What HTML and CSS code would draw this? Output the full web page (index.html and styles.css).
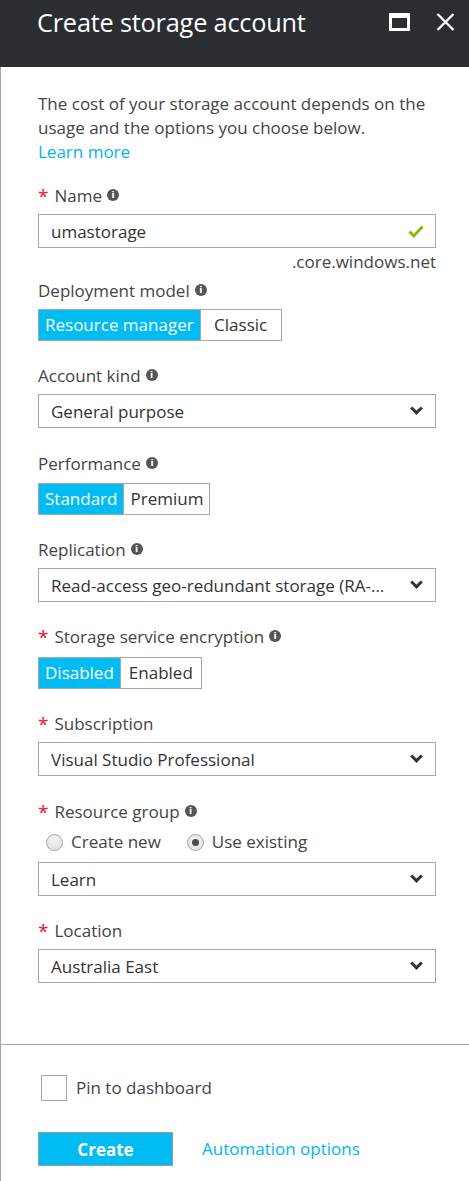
FILE: index.html
```html
<!DOCTYPE html>
<html lang="en">
<head>
<meta charset="utf-8">
<title>Create storage account</title>
<link rel="stylesheet" href="styles.css">
</head>
<body>
<div class="blade">
  <header class="blade-header">
    <h1 class="blade-title">Create storage account</h1>
    <div class="blade-actions">
      <svg class="icon-maximize" width="21" height="18" viewBox="0 0 21 18" aria-hidden="true">
        <path fill="#ffffff" fill-rule="evenodd" d="M0 0H21V18H0Z M3 5V15H18V5Z"/>
      </svg>
      <svg class="icon-close" width="19" height="18" viewBox="0 0 19 18" aria-hidden="true">
        <path d="M1.5 1L17.5 17M17.5 1L1.5 17" stroke="#ffffff" stroke-width="2.4" fill="none"/>
      </svg>
    </div>
  </header>

  <main class="blade-content">
    <p class="intro">The cost of your storage account depends on the usage and the options you choose below.<br><a class="link" href="#">Learn more</a></p>

    <div class="field field-name">
      <div class="label"><span class="req">*</span>Name<span class="info">i</span></div>
      <div class="textbox">
        <span class="textbox-value">umastorage</span>
        <svg class="check" width="16" height="13" viewBox="0 0 16 13" aria-hidden="true">
          <path d="M1.5 6.5L5.8 11L14.5 1.5" stroke="#7fba00" stroke-width="2.6" fill="none"/>
        </svg>
      </div>
      <div class="suffix">.core.windows.net</div>
    </div>

    <div class="field field-tight">
      <div class="label">Deployment model<span class="info">i</span></div>
      <div class="toggle">
        <span class="toggle-opt selected">Resource manager</span><span class="toggle-opt">Classic</span>
      </div>
    </div>

    <div class="field">
      <div class="label">Account kind<span class="info">i</span></div>
      <div class="select"><span class="select-value">General purpose</span><span class="chev"></span></div>
    </div>

    <div class="field field-perf">
      <div class="label">Performance<span class="info">i</span></div>
      <div class="toggle">
        <span class="toggle-opt selected">Standard</span><span class="toggle-opt">Premium</span>
      </div>
    </div>

    <div class="field">
      <div class="label">Replication<span class="info">i</span></div>
      <div class="select"><span class="select-value">Read-access geo-redundant storage (RA-...</span><span class="chev"></span></div>
    </div>

    <div class="field field-enc">
      <div class="label"><span class="req">*</span>Storage service encryption<span class="info">i</span></div>
      <div class="toggle">
        <span class="toggle-opt selected">Disabled</span><span class="toggle-opt">Enabled</span>
      </div>
    </div>

    <div class="field">
      <div class="label"><span class="req">*</span>Subscription</div>
      <div class="select"><span class="select-value">Visual Studio Professional</span><span class="chev"></span></div>
    </div>

    <div class="field field-rg">
      <div class="label"><span class="req">*</span>Resource group<span class="info">i</span></div>
      <div class="radios">
        <label class="radio"><span class="radio-dot"></span>Create new</label>
        <label class="radio"><span class="radio-dot checked"></span>Use existing</label>
      </div>
      <div class="select"><span class="select-value">Learn</span><span class="chev"></span></div>
    </div>

    <div class="field">
      <div class="label"><span class="req">*</span>Location</div>
      <div class="select"><span class="select-value">Australia East</span><span class="chev"></span></div>
    </div>
  </main>

  <footer class="blade-footer">
    <label class="pin"><span class="checkbox"></span>Pin to dashboard</label>
    <div class="footer-actions">
      <button class="btn-create" type="button">Create</button>
      <a class="link automation" href="#">Automation options</a>
    </div>
  </footer>
</div>
</body>
</html>
```

FILE: styles.css
```css
* { box-sizing: border-box; }

html, body {
  margin: 0;
  padding: 0;
  background: #ffffff;
}

body {
  font-family: "Open Sans", "Noto Sans", "DejaVu Sans", sans-serif;
  font-size: 17px;
  color: #444444;
}

.blade {
  width: 469px;
  height: 1181px;
  display: flex;
  flex-direction: column;
  border-left: 1px solid #a3a3a3;
  background: #ffffff;
}

.blade-header {
  height: 67px;
  flex: none;
  background: #2a2e33;
  display: flex;
  align-items: flex-start;
  justify-content: space-between;
  padding: 5px 14px 0 37px;
  margin-left: -1px;
}

.blade-title {
  margin: 0;
  font-size: 25.3px;
  font-weight: 400;
  line-height: 34px;
  color: #ffffff;
  letter-spacing: -0.2px;
}

.blade-actions {
  display: flex;
  align-items: center;
  gap: 26px;
  padding-top: 8px;
}

.icon-maximize, .icon-close { display: block; }

.blade-content {
  flex: 1;
  padding: 25px 33px 0 37px;
}

.intro {
  margin: 0;
  line-height: 24px;
  color: #444444;
}

.link {
  color: #00b4f0;
  text-decoration: none;
}

.field { margin-top: 24px; }
.field-name { margin-top: 21px; }
.field-tight { margin-top: 7px; }
.field-perf { margin-top: 25px; }
.field-rg { margin-top: 25px; }

.label {
  display: flex;
  align-items: center;
  line-height: 22px;
  height: 22px;
  color: #444444;
}

.req {
  color: #e81123;
  margin-right: 6px;
  font-size: 19px;
}

.info {
  display: inline-flex;
  align-items: center;
  justify-content: center;
  width: 12px;
  height: 12px;
  border-radius: 50%;
  background: #555555;
  color: #ffffff;
  font-family: "DejaVu Sans", sans-serif;
  font-weight: 700;
  font-size: 9px;
  line-height: 12px;
  margin-left: 5px;
  margin-top: -3px;
}

.textbox, .select {
  margin-top: 7px;
  height: 34px;
  border: 1px solid #a8a8a8;
  display: flex;
  align-items: center;
  justify-content: space-between;
  padding: 0 11px 0 12px;
  color: #333333;
}

.textbox .check { display: block; margin-right: 0; }

.suffix {
  margin-top: 3px;
  text-align: right;
  line-height: 22px;
  color: #444444;
}

.chev {
  width: 9px;
  height: 9px;
  border-right: 3px solid #333333;
  border-bottom: 3px solid #333333;
  transform: rotate(45deg);
  margin: -5px 3px 0 0;
}

.toggle {
  margin-top: 7px;
  display: flex;
}

.toggle-opt {
  min-width: 81px;
  height: 32px;
  line-height: 30px;
  padding: 0 6px;
  text-align: center;
  border: 1px solid #a8a8a8;
  color: #333333;
  background: #ffffff;
}

.toggle-opt + .toggle-opt { border-left: none; }

.toggle-opt.selected {
  background: #00bcf2;
  color: #ffffff;
}

.field-perf .toggle { margin-top: 8px; }
.field-enc .toggle { margin-top: 9px; }

.radios {
  margin-top: 8px;
  display: flex;
  gap: 26px;
  padding-left: 8px;
  line-height: 22px;
}

.radio {
  display: flex;
  align-items: center;
  gap: 8px;
  color: #444444;
}

.radio-dot {
  width: 17px;
  height: 17px;
  border-radius: 50%;
  border: 1px solid #a6a6a6;
  background: radial-gradient(circle at 50% 35%, #f4f4f4 0%, #dcdcdc 100%);
  display: flex;
  align-items: center;
  justify-content: center;
}

.radio-dot.checked::after {
  content: "";
  width: 7px;
  height: 7px;
  border-radius: 50%;
  background: #4a4a4a;
}

.field-rg .select { margin-top: 9px; }

.blade-footer {
  flex: none;
  height: 137px;
  border-top: 1px solid #a8a8a8;
  margin-left: -1px;
  padding: 30px 0 0 38px;
}

.pin {
  display: flex;
  align-items: center;
  gap: 9px;
  margin-left: 3px;
  color: #444444;
  line-height: 22px;
}

.checkbox {
  width: 26px;
  height: 26px;
  border: 1px solid #a8a8a8;
  background: #ffffff;
}

.footer-actions {
  margin-top: 31px;
  display: flex;
  align-items: center;
  gap: 29px;
}

.btn-create {
  width: 135px;
  height: 34px;
  border: 1px solid #9a9a9a;
  background: #00bcf2;
  color: #ffffff;
  font-family: inherit;
  font-size: 17px;
  font-weight: 700;
  padding: 0;
}

.automation { line-height: 22px; }
```
